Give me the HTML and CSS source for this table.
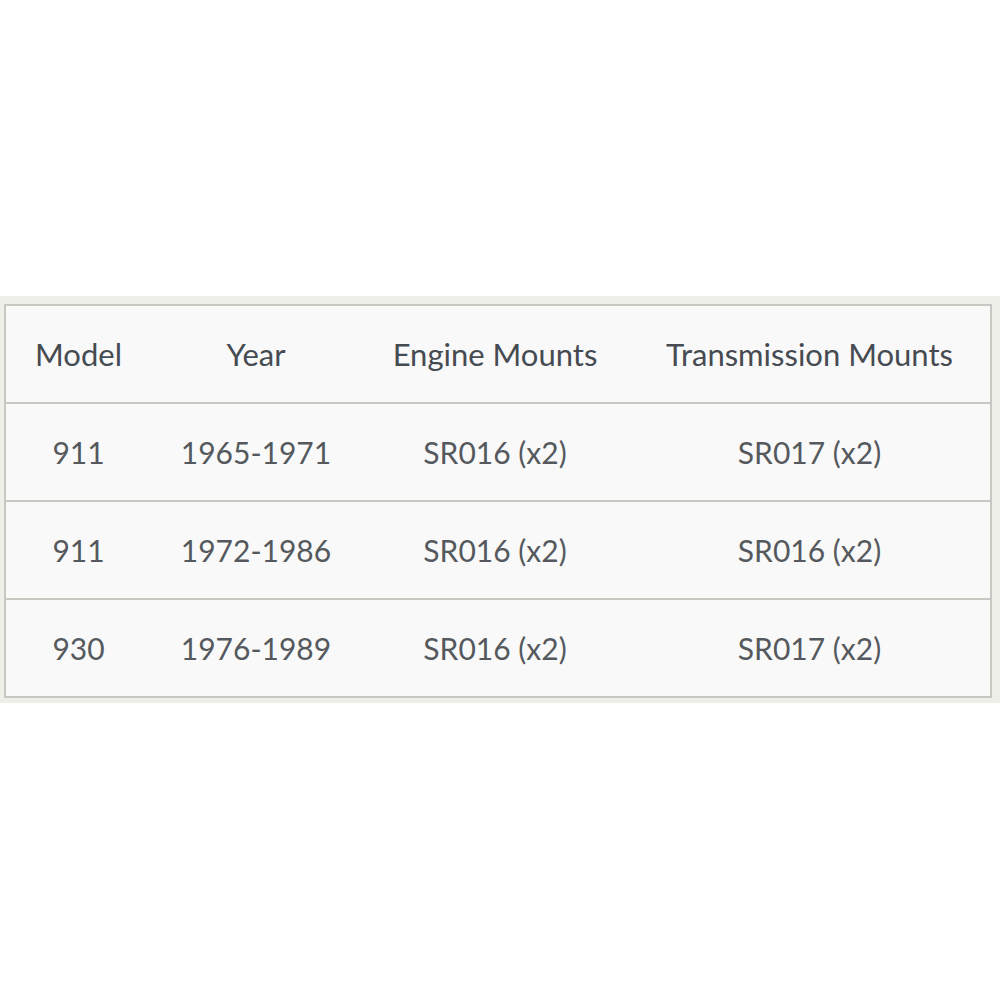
FILE: index.html
```html
<!DOCTYPE html>
<html>
<head>
<meta charset="utf-8">
<link rel="stylesheet" href="styles.css">
</head>
<body>
<div class="band">
  <table class="mounts">
    <colgroup>
      <col class="c1"><col class="c2"><col class="c3"><col class="c4">
    </colgroup>
    <thead>
      <tr><th>Model</th><th>Year</th><th>Engine Mounts</th><th>Transmission Mounts</th></tr>
    </thead>
    <tbody>
      <tr><td>911</td><td>1965-1971</td><td>SR016 (x2)</td><td>SR017 (x2)</td></tr>
      <tr><td>911</td><td>1972-1986</td><td>SR016 (x2)</td><td>SR016 (x2)</td></tr>
      <tr><td>930</td><td>1976-1989</td><td>SR016 (x2)</td><td>SR017 (x2)</td></tr>
    </tbody>
  </table>
</div>
</body>
</html>
```
FILE: styles.css
```css
html, body {
  margin: 0;
  padding: 0;
  background: #ffffff;
}
body {
  font-family: Lato, "Open Sans", sans-serif;
  padding-top: 296px;
}
.band {
  background: #efefe9;
  padding: 8px 10px 8px 4px;
  height: 391px;
}
.mounts {
  width: 986px;
  height: 390px;
  border-collapse: collapse;
  table-layout: fixed;
  background: #f9f9f9;
  border: 2px solid #c6c9c2;
}
.c1 { width: 146px; }
.c2 { width: 210px; }
.c3 { width: 268px; }
.c4 { width: 362px; }
.mounts th,
.mounts td {
  text-align: center;
  font-size: 31px;
  padding: 0;
  height: 96px;
}
.mounts th {
  font-weight: 400;
  color: #464b52;
  border-bottom: 2px solid #c6c9c2;
}
.mounts td {
  font-size: 30px;
  color: #55595e;
  border-bottom: 2px solid #c6c9c2;
}
.mounts tbody tr:last-child td {
  border-bottom: none;
}
```
